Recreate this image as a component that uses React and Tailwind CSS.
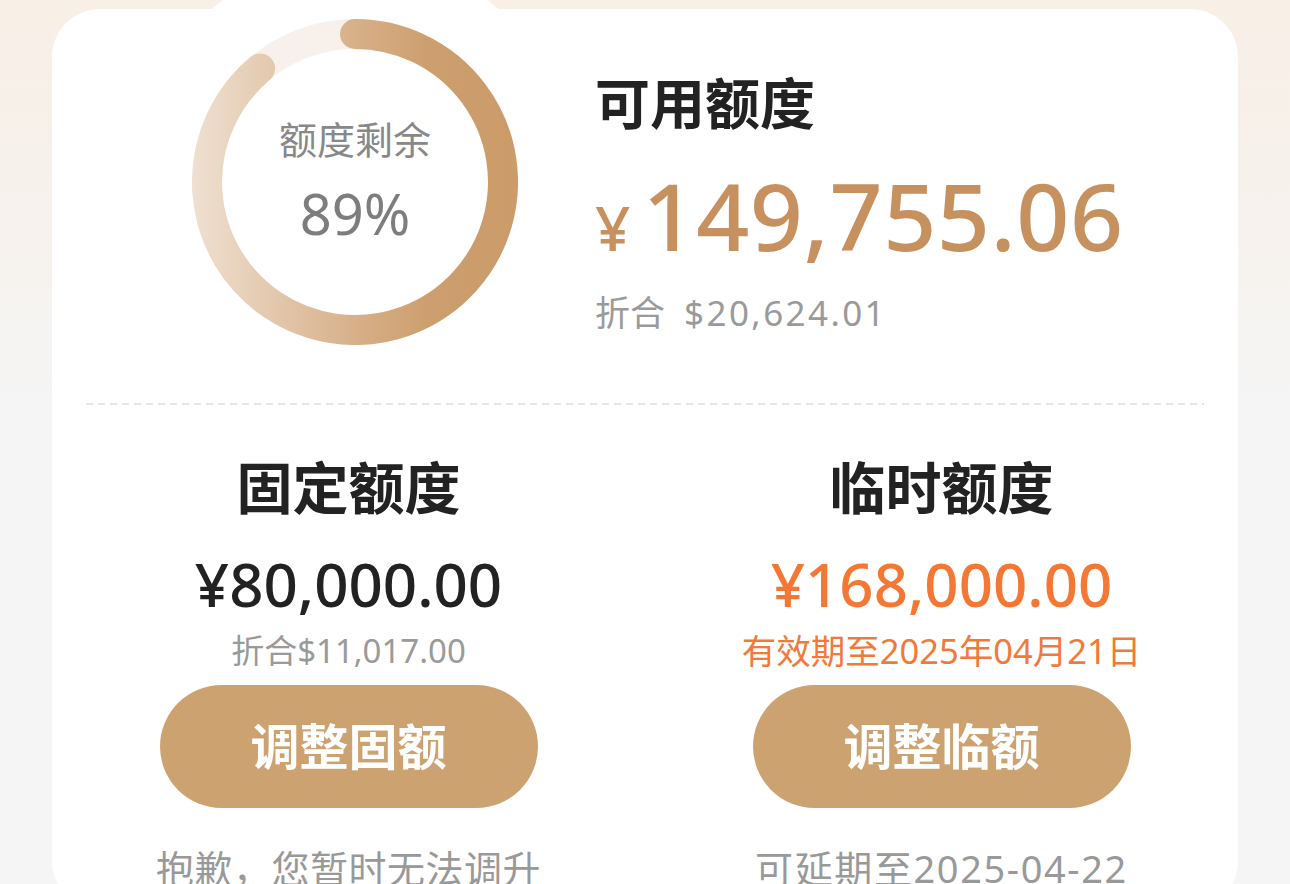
import React from 'react';

const RING_SIZE = 326;
const RING_R = 148;

function QuotaRing({ percent }) {
  const c = RING_SIZE / 2;
  // arc runs clockwise from 12 o'clock
  const angle = (percent / 100) * 2 * Math.PI * 0.999;
  const x = c + RING_R * Math.sin(angle);
  const y = c - RING_R * Math.cos(angle);
  const large = percent > 50 ? 1 : 0;

  return (
    <div className="relative w-[326px] h-[326px] shrink-0">
      <svg width={RING_SIZE} height={RING_SIZE} viewBox="0 0 326 326" className="absolute inset-0">
        <defs>
          <linearGradient id="ringGrad" gradientUnits="userSpaceOnUse" x1="0" y1="0" x2="326" y2="0">
            <stop offset="0" stopColor="#efe0d1" />
            <stop offset="0.5" stopColor="#d7b089" />
            <stop offset="0.72" stopColor="#cd9f6e" />
            <stop offset="1" stopColor="#cb9b69" />
          </linearGradient>
        </defs>
        <circle cx={c} cy={c} r={RING_R} fill="none" stroke="#f8f1eb" strokeWidth="30" />
        <path
          d={`M ${c} ${c - RING_R} A ${RING_R} ${RING_R} 0 ${large} 1 ${x} ${y}`}
          fill="none"
          stroke="url(#ringGrad)"
          strokeWidth="30"
          strokeLinecap="round"
        />
      </svg>
      <div className="absolute inset-0 flex flex-col items-center">
        <div className="mt-[97px] text-[38px] leading-[46px] text-[#888888]">额度剩余</div>
        <div className="mt-[21px] text-[56px] leading-[60px] text-[#7d7d7d]">{percent}%</div>
      </div>
    </div>
  );
}

function QuotaColumn({ title, amount, amountColor, sub, subClass, action, note, noteClass }) {
  return (
    <div className="flex flex-col items-center">
      <div className="text-[56px] leading-[60px] font-bold text-[#222222]">{title}</div>
      <div className={`mt-[32px] text-[60px] leading-[70px] font-medium ${amountColor}`}>{amount}</div>
      <div className={`mt-[12px] leading-[40px] whitespace-nowrap ${subClass}`}>{sub}</div>
      <button className="mt-[14px] w-[378px] h-[123px] rounded-full bg-[#cda271] text-white text-[49px] font-bold">
        {action}
      </button>
      <div className={`mt-[37px] text-[38px] leading-[46px] text-[#999999] whitespace-nowrap ${noteClass}`}>{note}</div>
    </div>
  );
}

export default function App() {
  return (
    <div className="relative h-[884px] overflow-hidden bg-[linear-gradient(180deg,#f8efe6_0%,#f6f2ee_30%,#f5f5f5_45%)] font-['Noto_Sans','Noto_Sans_CJK_SC',sans-serif]">
      {/* white halo behind the ring that pokes above the card */}
      <div className="absolute left-[130px] top-[-43px] w-[450px] h-[450px] rounded-full bg-white" />

      <div className="relative mx-[52px] mt-[9px] h-[900px] rounded-[48px] bg-white">
        <div className="flex pt-[10px] pl-[140px]">
          <QuotaRing percent={89} />
          <div className="ml-[77px] flex flex-col">
            <div className="mt-[54px] text-[55px] leading-[60px] font-bold text-[#222222]">可用额度</div>
            <div className="mt-[36px] flex items-baseline h-[92px] text-[#c6915f] font-medium">
              <span className="text-[62px] leading-[92px] mr-[12px]">¥</span>
              <span className="text-[93px] leading-[92px] tracking-[0.5px]">149,755.06</span>
            </div>
            <div className="mt-[30px] text-[35px] leading-[44px] text-[#9a9a9a]">
              折合 <span className="ml-[10px] tracking-[2.4px]">$20,624.01</span>
            </div>
          </div>
        </div>

        <div className="mx-[34px] mt-[58px] h-[2px] bg-[repeating-linear-gradient(90deg,#e6e6e6_0_7px,transparent_7px_12px)]" />

        <div className="grid grid-cols-2 pt-[52px]">
          <QuotaColumn
            title="固定额度"
            amount="¥80,000.00"
            amountColor="text-[#222222]"
            sub="折合$11,017.00"
            subClass="text-[33px] text-[#9a9a9a]"
            action="调整固额"
            note="抱歉，您暂时无法调升"
            noteClass="tracking-[0.5px]"
          />
          <QuotaColumn
            title="临时额度"
            amount="¥168,000.00"
            amountColor="text-[#f47834]"
            sub="有效期至2025年04月21日"
            subClass="text-[34.5px] text-[#f07a3a]"
            action="调整临额"
            note="可延期至2025-04-22"
            noteClass="tracking-[1.6px]"
          />
        </div>
      </div>
    </div>
  );
}
